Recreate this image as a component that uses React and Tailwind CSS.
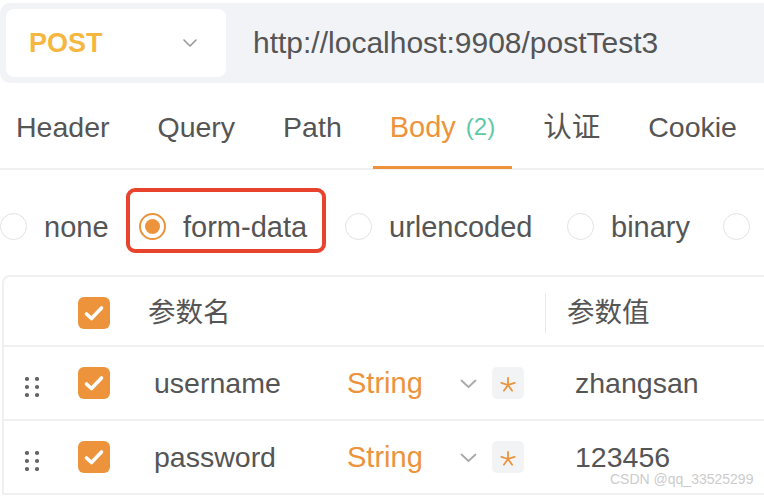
import React from "react";

function Check() {
  return (
    <div className="w-[32px] h-[32px] rounded-[6px] bg-[#ec933b] flex items-center justify-center shrink-0">
      <svg width="32" height="32" viewBox="0 0 32 32">
        <path d="M8.5 17 L13.5 21.5 L23.5 11" fill="none" stroke="white" strokeWidth="3.6" strokeLinecap="round" strokeLinejoin="round" />
      </svg>
    </div>
  );
}

function Radio({ on }) {
  if (on) {
    return (
      <div className="w-[27px] h-[27px] rounded-full border-2 border-[#ec933b] flex items-center justify-center shrink-0 bg-white">
        <div className="w-[15px] h-[15px] rounded-full bg-[#ec933b]" />
      </div>
    );
  }
  return <div className="w-[27px] h-[27px] rounded-full border-[1.5px] border-[#e2e2e2] bg-white shrink-0" />;
}

function Dots() {
  return (
    <svg width="14" height="20" viewBox="0 0 14 20" className="mt-[7px]">
      {[2, 10, 18].map((y) => (
        <g key={y}>
          <circle cx="2" cy={y} r="2.1" fill="#666" />
          <circle cx="12" cy={y} r="2.1" fill="#666" />
        </g>
      ))}
    </svg>
  );
}

function Asterisk() {
  const spokes = [-90, -18, 54, 126, 198];
  return (
    <div className="w-[32px] h-[32px] rounded-[5px] bg-[#f2f3f5] flex items-center justify-center shrink-0">
      <svg width="16" height="16" viewBox="0 0 16 16" className="mt-[4px]">
        {spokes.map((a) => {
          const r = (a * Math.PI) / 180;
          return (
            <line key={a} x1="8" y1="8" x2={8 + 7 * Math.cos(r)} y2={8 + 7 * Math.sin(r)} stroke="#ec933b" strokeWidth="1.8" strokeLinecap="round" />
          );
        })}
      </svg>
    </div>
  );
}

function Row({ name, value }) {
  return (
    <div className="h-[74px] border-b-2 border-[#f0f0f0] flex items-center">
      <div className="w-[74px] pl-[21px] flex items-center shrink-0">
        <Dots />
      </div>
      <Check />
      <div className="w-[237px] pl-[44px] shrink-0 text-[28.5px]">{name}</div>
      <div className="w-[113px] text-[#ec933b] shrink-0 text-[29px]">String</div>
      <svg width="17" height="10" viewBox="0 0 17 10" className="shrink-0 mt-[2px]">
        <polyline points="1.5,1.5 8.5,8 15.5,1.5" fill="none" stroke="#aaa" strokeWidth="1.8" strokeLinecap="round" strokeLinejoin="round" />
      </svg>
      <div className="ml-[15px]">
        <Asterisk />
      </div>
      <div className="pl-[51px] text-[28.5px]">{value}</div>
    </div>
  );
}

export default function App() {
  const tabs = ["Header", "Query", "Path", "Body", "认证", "Cookie"];
  const radios = [
    { t: "none", w: "w-[62px]" },
    { t: "form-data", w: "w-[129px]" },
    { t: "urlencoded", w: "w-[145px]" },
    { t: "binary", w: "w-[79px]" },
    { t: "", w: "" },
  ];
  return (
    <div className="w-[764px] h-[498px] bg-white overflow-hidden relative pt-[3px] text-[28px] leading-none text-[#555] font-['Liberation_Sans','Noto_Sans_CJK_SC',sans-serif]">
      {/* URL bar */}
      <div className="h-[80px] bg-[#f2f3f7] rounded-l-[10px] flex items-center pl-[6px] whitespace-nowrap">
        <div className="w-[220px] h-[68px] bg-white rounded-[8px] flex items-center justify-between pl-[23px] pr-[29px] shrink-0">
          <span className="text-[27px] font-bold text-[#f5b740]">POST</span>
          <svg width="14" height="8" viewBox="0 0 14 8">
            <polyline points="1,1 7,7 13,1" fill="none" stroke="#999" strokeWidth="1.6" strokeLinecap="round" strokeLinejoin="round" />
          </svg>
        </div>
        <span className="ml-[27px] text-[30px]">http://localhost:9908/postTest3</span>
      </div>

      {/* Tabs */}
      <div className="h-[87px] border-b-2 border-[#f0f0f0] flex gap-[14px] ml-[-1px] whitespace-nowrap">
        {tabs.map((t) => {
          const active = t === "Body";
          return (
            <div key={t} className="relative h-full flex items-center pt-[3px] px-[17px]">
              {active ? (
                <>
                  <span className="text-[#ec933b] text-[29px]">Body</span>
                  <span className="ml-[10px] text-[24px] text-[#5cc9a7]">(2)</span>
                  <div className="absolute left-0 right-0 bottom-[-1px] h-[3px] bg-[#ec933b]" />
                </>
              ) : (
                <span className="text-[28.5px]">{t}</span>
              )}
            </div>
          );
        })}
      </div>

      {/* Radios */}
      <div className="h-[105px] flex gap-[33px] pt-[43px] whitespace-nowrap">
        {radios.map((r, i) => (
          <div key={i} className="relative h-[27px] flex items-center gap-[17px] shrink-0">
            <Radio on={r.t === "form-data"} />
            {r.t && <span className={`${r.w} pt-[1px] text-[29px]`}>{r.t}</span>}
            {r.t === "form-data" && (
              <div className="absolute left-[-13px] right-[-14px] top-[-25px] bottom-[-13px] border-4 border-[#e8432d] rounded-[9px]" />
            )}
          </div>
        ))}
      </div>

      {/* Table */}
      <div className="ml-[2px] border-l-2 border-t-2 border-[#f0f0f0] rounded-tl-[8px] whitespace-nowrap">
        <div className="h-[70px] border-b-2 border-[#f0f0f0] flex items-center pt-[4px]">
          <div className="w-[74px] shrink-0" />
          <Check />
          <div className="w-[435px] pl-[38px] shrink-0 text-[27.5px]">参数名</div>
          <div className="w-[1px] h-[40px] bg-[#e8e8e8] shrink-0" />
          <div className="pl-[21px] text-[27.5px]">参数值</div>
        </div>
        <Row name="username" value="zhangsan" />
        <Row name="password" value="123456" />
      </div>

      <div className="absolute left-[610px] top-[472px] text-[14px] leading-none text-[#cccccc] whitespace-nowrap">
        CSDN @qq_33525299
      </div>
    </div>
  );
}
